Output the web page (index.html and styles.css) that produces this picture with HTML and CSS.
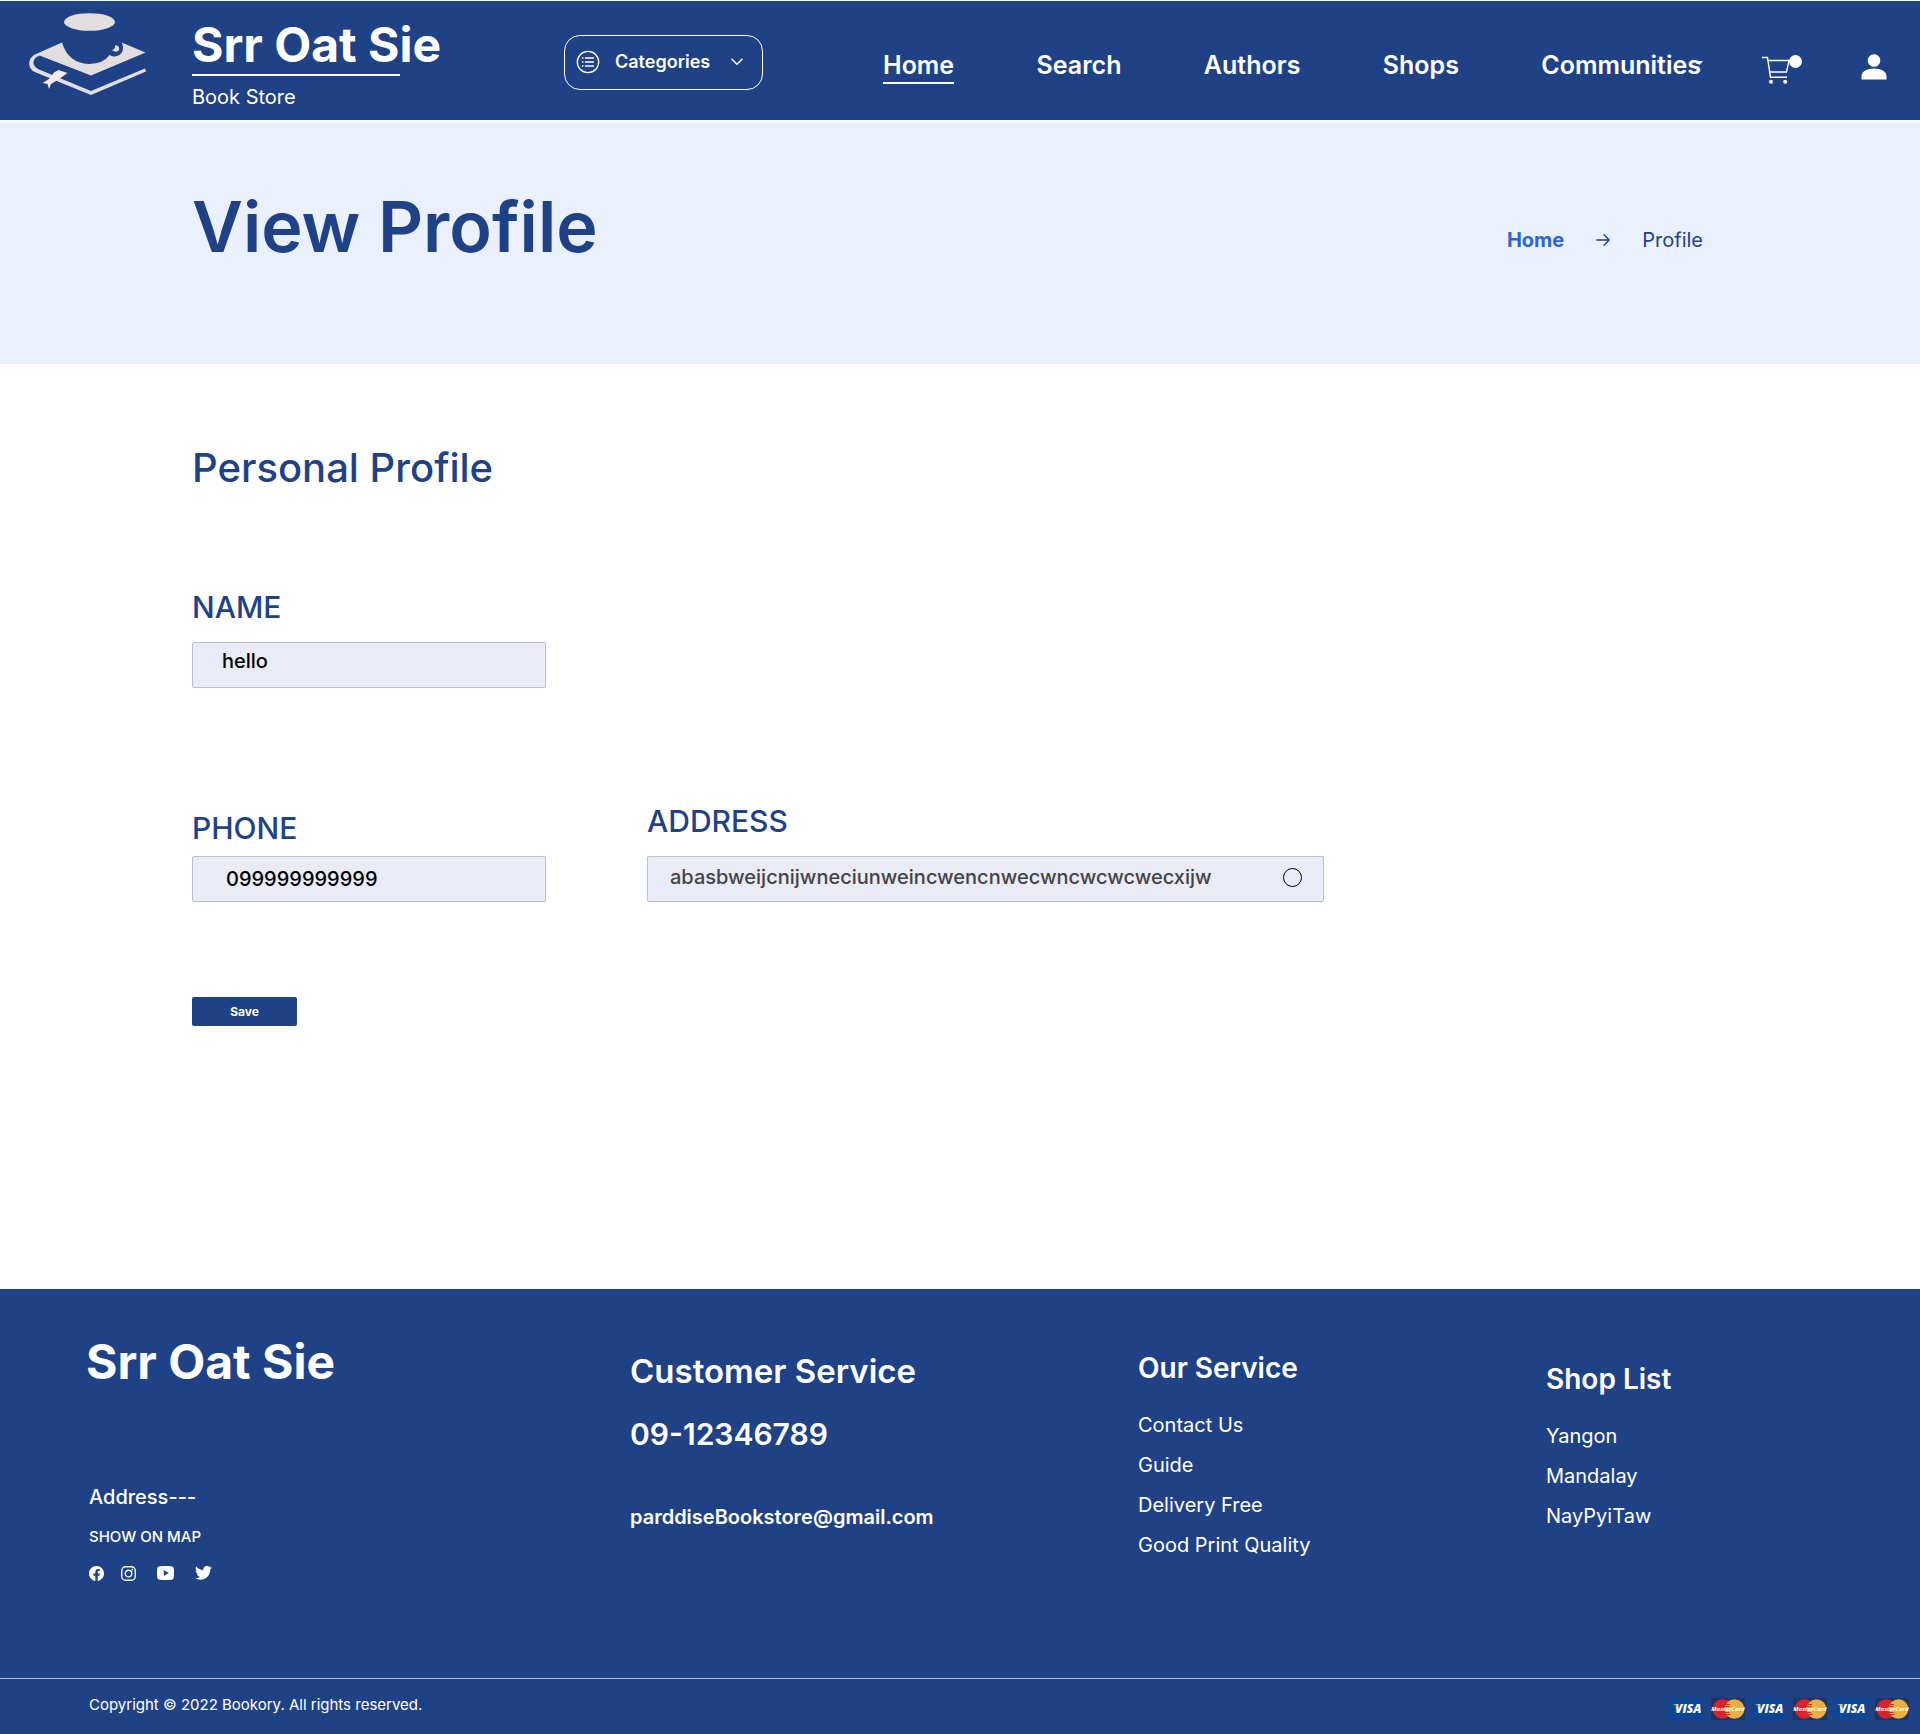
FILE: index.html
```html
<!DOCTYPE html>
<html lang="en">
<head>
<meta charset="utf-8">
<meta name="viewport" content="width=device-width, initial-scale=1">
<title>View Profile - Srr Oat Sie</title>
<link rel="stylesheet" href="styles.css">
</head>
<body>
<header class="header">
  <a class="logo" href="#" aria-label="Srr Oat Sie">
    <svg width="120" height="84" viewBox="28 12 120 84">
      <ellipse cx="89.500" cy="22" rx="25.500" ry="8.800" fill="#e2dee0"/>
      <path d="M62 42.500L36 54C27 58 27 69 36 72.500L91 95L146 71.500L145 68.500L91 91L39 69.500C31 66 32 58 39.500 55.500L91 75.500L145.500 52.500L121.500 42.500C125 48 122.500 56 115 56.500Q112 56.500 109.500 55Q104 63.500 89 64Q68 63 62 42.500Z" fill="#e2dee0"/>
      <path d="M112 50.500Q115 49 115.500 45Q120 46 119 50Q117 53 112 50.500Z" fill="#e2dee0"/>
      <path d="M58.500 70L67.500 73L58.500 79.500L51 84L49 89L47.500 84L42.500 83L49 79L54 72.500Z" fill="#f6e9ec"/>
    </svg>
  </a>
  <div class="brand">
    <a class="wordmark" href="#">Srr Oat Sie</a>
    <span class="tagline">Book Store</span>
  </div>
  <div class="categories-slot">
    <button class="categories" type="button">
      <svg width="24" height="24" viewBox="0 0 24 24" fill="none" stroke="#fff">
        <circle cx="12" cy="12" r="10.700" stroke-width="1.300"/>
        <path d="M9.500 8h8M9.500 12h8M9.500 16h8" stroke-width="1.400" stroke-linecap="round"/>
        <path d="M6 8h1.400M6 12h1.400M6 16h1.400" stroke-width="1.600"/>
      </svg>
      <span>Categories</span>
      <svg width="12" height="8" viewBox="0 0 12 8" fill="none" stroke="#fff" stroke-width="1.500" stroke-linecap="round" stroke-linejoin="round"><path d="M1 1.200l5 5 5-5"/></svg>
    </button>
  </div>
  <nav class="nav">
    <a class="nav-link nav-link-active" href="#">Home</a>
    <a class="nav-link" href="#">Search</a>
    <a class="nav-link" href="#">Authors</a>
    <a class="nav-link" href="#">Shops</a>
    <a class="nav-link nav-link-more" href="#">Communities<svg class="nav-caret" width="7" height="4" viewBox="0 0 7 4"><path d="M0 0h7L3.500 4z" fill="#fff"/></svg></a>
  </nav>
  <div class="actions">
    <a href="#" aria-label="Cart">
      <svg width="40" height="30" viewBox="0 0 40 30" fill="none" stroke="#fff" stroke-width="1.400">
        <path d="M0 3.500h5.500L8.500 23.300H25M6 6.500h21L24.500 18H8"/>
        <circle cx="9" cy="27.700" r="2" fill="#fff" stroke="none"/>
        <circle cx="23.200" cy="27.700" r="2" fill="#fff" stroke="none"/>
        <circle cx="33.500" cy="7.500" r="6.500" fill="#fff" stroke="none"/>
      </svg>
    </a>
    <a href="#" aria-label="Account">
      <svg width="26" height="26" viewBox="0 0 26 26" fill="#fff"><circle cx="13" cy="6.500" r="6.300"/><path d="M.5 25.500V22C.5 17.500 6 14.500 13 14.500S25.500 17.500 25.500 22v3.500z"/></svg>
    </a>
  </div>
</header>

<section class="banner">
  <h1 class="banner-title">View Profile</h1>
  <nav class="breadcrumb" aria-label="Breadcrumb">
    <a class="breadcrumb-home" href="#">Home</a>
    <svg width="14" height="12" viewBox="0 0 14 12" fill="none" stroke="#1f4287" stroke-width="1.300" stroke-linecap="round" stroke-linejoin="round"><path d="M.8 6h12.400M8 .8L13.200 6 8 11.200"/></svg>
    <span>Profile</span>
  </nav>
</section>

<main class="main">
  <h2 class="main-title">Personal Profile</h2>
  <form class="form">
    <div class="field">
      <label class="label" for="name">NAME</label>
      <input class="input input-name" id="name" type="text" value="hello">
    </div>
    <div class="row">
      <div class="field field-tight">
        <label class="label" for="phone">PHONE</label>
        <input class="input" id="phone" type="tel" value="099999999999">
      </div>
      <div class="field field-wide">
        <label class="label" for="address">ADDRESS</label>
        <div class="address-box">
          <input class="address-input" id="address" type="text" value="abasbweijcnijwneciunweincwencnwecwncwcwcwecxijw">
          <input class="address-radio" type="radio" name="default-address" aria-label="Use this address">
        </div>
      </div>
    </div>
    <button class="save" type="button">Save</button>
  </form>
</main>

<footer class="footer">
  <div class="footer-columns">
    <section class="about">
      <a class="wordmark" href="#">Srr Oat Sie</a>
      <div class="contact">
        <p class="address">Address---</p>
        <a class="map-link" href="#">SHOW ON MAP</a>
        <div class="social">
          <a href="#" aria-label="Facebook"><svg width="15" height="15" viewBox="0 0 16 16"><path fill="#fff" d="M16 8.050C16 3.600 12.420 0 8 0S0 3.600 0 8.050c0 4.020 2.930 7.350 6.750 7.950v-5.620H4.720V8.050h2.030V6.270c0-2.010 1.190-3.130 3.020-3.130.88 0 1.790.16 1.790.16v1.980h-1.010c-.99 0-1.300.62-1.300 1.260v1.510h2.220l-.36 2.330H9.250V16C13.070 15.400 16 12.070 16 8.050z"/></svg></a>
          <a href="#" aria-label="Instagram"><svg width="15" height="15" viewBox="0 0 16 16" fill="none" stroke="#fff" stroke-width="1.400"><rect x=".8" y=".8" width="14.400" height="14.400" rx="4"/><circle cx="8" cy="8" r="3.500"/><circle cx="12.200" cy="3.800" r=".9" fill="#fff" stroke="none"/></svg></a>
          <a class="social-wide" href="#" aria-label="YouTube"><svg width="17" height="14" viewBox="0 0 17 14"><path fill="#fff" fill-rule="evenodd" d="M2.500.3Q8.500-.3 14.500.3 16.500.5 16.800 2.500 17.200 7 16.800 11.500 16.500 13.500 14.500 13.700 8.500 14.300 2.500 13.700.5 13.500.2 11.500-.2 7 .2 2.500.5.5 2.500.3zM6.800 4v6l5-3z"/></svg></a>
          <a class="social-wide" href="#" aria-label="Twitter"><svg width="17" height="16" viewBox="0 0 24 22"><path fill="#fff" d="M24 3.300c-.9.400-1.800.7-2.800.8 1-.6 1.800-1.600 2.200-2.700-1 .6-2 1-3.100 1.200A4.900 4.900 0 0 0 11.900 7 14 14 0 0 1 1.700 1.900a4.900 4.900 0 0 0 1.500 6.500c-.8 0-1.600-.2-2.200-.6v.1c0 2.400 1.700 4.400 3.900 4.800-.7.200-1.500.2-2.200.1.600 2 2.400 3.400 4.600 3.400A9.900 9.900 0 0 1 0 18.200a14 14 0 0 0 7.500 2.200c9.100 0 14-7.500 14-14v-.6c1-.7 1.800-1.600 2.500-2.500z"/></svg></a>
        </div>
      </div>
    </section>
    <section class="service">
      <h2 class="service-title">Customer Service</h2>
      <a class="service-phone" href="#">09-12346789</a>
      <a class="service-mail" href="#">parddiseBookstore@gmail.com</a>
    </section>
    <section class="links">
      <h2 class="links-title">Our Service</h2>
      <a href="#">Contact Us</a>
      <a href="#">Guide</a>
      <a href="#">Delivery Free</a>
      <a href="#">Good Print Quality</a>
    </section>
    <section class="links links-shops">
      <h2 class="links-title">Shop List</h2>
      <a href="#">Yangon</a>
      <a href="#">Mandalay</a>
      <a href="#">NayPyiTaw</a>
    </section>
  </div>
  <div class="footer-bottom">
    <p class="copyright">Copyright © 2022 Bookory. All rights reserved.</p>
    <div class="cards">
      <svg width="34" height="22" viewBox="0 0 34 22"><rect width="34" height="22" rx="1" fill="#0e4595"/><text x="5" y="15" class="visa-text">VISA</text><path d="M3 6h3.500q1 0 1.200 1l.6 3Q7 7.500 3 6z" fill="#f2ae14"/></svg>
      <svg width="34" height="22" viewBox="0 0 34 22"><rect width="34" height="22" rx="1" fill="#1c3668"/><circle cx="11.500" cy="11" r="9.800" fill="#d9222a"/><circle cx="23.500" cy="11" r="9.800" fill="#e9b040"/><path d="M14 6.500h5M13.500 8.500h5M13.500 14.500h5M14.500 16.500h5" stroke="#d9222a"/><text x="17" y="13" class="mastercard-text">MasterCard</text></svg>
      <svg width="34" height="22" viewBox="0 0 34 22"><rect width="34" height="22" rx="1" fill="#0e4595"/><text x="5" y="15" class="visa-text">VISA</text><path d="M3 6h3.500q1 0 1.200 1l.6 3Q7 7.500 3 6z" fill="#f2ae14"/></svg>
      <svg width="34" height="22" viewBox="0 0 34 22"><rect width="34" height="22" rx="1" fill="#1c3668"/><circle cx="11.500" cy="11" r="9.800" fill="#d9222a"/><circle cx="23.500" cy="11" r="9.800" fill="#e9b040"/><path d="M14 6.500h5M13.500 8.500h5M13.500 14.500h5M14.500 16.500h5" stroke="#d9222a"/><text x="17" y="13" class="mastercard-text">MasterCard</text></svg>
      <svg width="34" height="22" viewBox="0 0 34 22"><rect width="34" height="22" rx="1" fill="#0e4595"/><text x="5" y="15" class="visa-text">VISA</text><path d="M3 6h3.500q1 0 1.200 1l.6 3Q7 7.500 3 6z" fill="#f2ae14"/></svg>
      <svg width="34" height="22" viewBox="0 0 34 22"><rect width="34" height="22" rx="1" fill="#1c3668"/><circle cx="11.500" cy="11" r="9.800" fill="#d9222a"/><circle cx="23.500" cy="11" r="9.800" fill="#e9b040"/><path d="M14 6.500h5M13.500 8.500h5M13.500 14.500h5M14.500 16.500h5" stroke="#d9222a"/><text x="17" y="13" class="mastercard-text">MasterCard</text></svg>
    </div>
  </div>
</footer>
</body>
</html>
```
FILE: styles.css
```css
:root {
  --navy: #1f4287;
  --pale: #eaf1fd;
  --field: #e9ebf7;
  --line: #bdbfc9;
}

* {
  box-sizing: border-box;
}

body {
  margin: 0;
  background: #fff;
  color: var(--navy);
  font-family: Inter, "Liberation Sans", sans-serif;
  font-size: 20px;
  line-height: 24px;
}

h1, h2, p {
  margin: 0;
}

a {
  color: inherit;
  text-decoration: none;
}

svg {
  display: block;
  flex: none;
}

input, button {
  font: inherit;
}

/* Header */
.header {
  display: grid;
  grid-template-columns: minmax(0, 192fr) minmax(0, 372fr) minmax(0, 319fr) minmax(0, 818fr) minmax(0, 219fr);
  margin: 1px 0 2px;
  padding: 11px 0;
  background: var(--navy);
  color: #fff;
}

.logo {
  padding-left: 28px;
}

.brand {
  display: flex;
  flex-direction: column;
  align-items: flex-start;
  padding-top: 4px;
}

.wordmark {
  font-size: 48px;
  font-weight: 700;
  line-height: 58px;
}

.brand::after {
  content: "";
  order: 1;
  width: 208px;
  height: 2px;
  background: #fff;
}

.tagline {
  order: 2;
  margin-top: 9px;
}

.categories-slot {
  padding-top: 23px;
}

.categories {
  display: flex;
  align-items: center;
  gap: 15px;
  width: 199px;
  height: 55px;
  padding: 0 19px 2px 11px;
  border: 1px solid #fff;
  border-radius: 16px;
  background: none;
  color: #fff;
  font-size: 18px;
  font-weight: 600;
}

.categories svg:last-child {
  margin-left: auto;
}

.nav {
  display: flex;
  justify-content: space-between;
  align-items: flex-start;
  padding-top: 38px;
  font-size: 25px;
  font-weight: 600;
  line-height: 30px;
}

.nav-link {
  padding-bottom: 2px;
  border-bottom: 2px solid transparent;
}

.nav-link-active {
  border-color: #fff;
}

.nav-link-more {
  position: relative;
}

.nav-caret {
  position: absolute;
  top: 11px;
  right: -2px;
}

.actions {
  display: flex;
  justify-content: space-between;
  padding: 42px 33px 0 61px;
}

/* Banner */
.banner {
  display: flex;
  justify-content: space-between;
  align-items: flex-start;
  padding: 63px 217px 95px 10%;
  background: var(--pale);
}

.banner-title {
  font-size: 70px;
  font-weight: 600;
  line-height: 84px;
}

.breadcrumb {
  display: flex;
  align-items: center;
  gap: 32px;
  padding-top: 43px;
}

.breadcrumb-home {
  color: #2b63d9;
  font-weight: 700;
}

/* Profile form */
.main {
  padding: 80px 10% 263px;
}

.main-title {
  margin-bottom: 97px;
  font-size: 40px;
  font-weight: 500;
  line-height: 48px;
}

.row {
  display: flex;
  align-items: flex-end;
  gap: 101px;
  margin: 115px 0 95px;
}

.field {
  display: flex;
  flex-direction: column;
  align-items: flex-start;
  gap: 17px;
}

.field-tight {
  gap: 10px;
}

.field-wide {
  flex: 0 1 677px;
  align-items: stretch;
}

.label {
  font-size: 30px;
  font-weight: 500;
  line-height: 36px;
}

.input,
.address-box {
  height: 46px;
  border: 1px solid var(--line);
  border-radius: 2px;
  background: var(--field);
}

.input {
  width: 354px;
  padding: 0 33px;
  color: #000;
  font-weight: 500;
}

.input-name {
  padding: 0 29px 8px;
}

.address-box {
  display: flex;
  align-items: center;
  padding: 0 21px 4px 22px;
}

.address-input {
  flex: 1;
  min-width: 0;
  padding: 0;
  border: 0;
  background: none;
  color: #444;
  font-weight: 500;
}

.address-radio {
  appearance: none;
  width: 19px;
  height: 19px;
  margin: 0;
  border: 1px solid #000;
  border-radius: 50%;
}

.address-radio:checked {
  background: var(--navy);
}

.save {
  display: block;
  width: 105px;
  height: 29px;
  padding: 0;
  border: 0;
  border-radius: 2px;
  background: var(--navy);
  color: #fff;
  font-size: 12px;
  font-weight: 700;
}

/* Footer */
.footer {
  background: var(--navy);
  color: #fff;
}

.footer-columns {
  display: grid;
  grid-template-columns: minmax(0, 544fr) minmax(0, 508fr) minmax(0, 408fr) minmax(0, 287fr);
  padding: 44px 87px 97px 86px;
}

.contact {
  display: flex;
  flex-direction: column;
  align-items: flex-start;
  gap: 18px;
  padding: 94px 0 0 3px;
}

.address {
  font-weight: 500;
}

.map-link {
  font-size: 15px;
  font-weight: 500;
  line-height: 20px;
}

.social {
  display: flex;
  align-items: center;
  gap: 17px;
}

.social-wide {
  margin-left: 4px;
}

.service {
  display: flex;
  flex-direction: column;
  align-items: flex-start;
  padding-top: 18px;
  font-weight: 600;
}

.service-title {
  font-size: 33px;
  font-weight: 600;
  line-height: 40px;
}

.service-phone {
  margin: 25px 0 53px;
  font-size: 30px;
  line-height: 36px;
}

.links {
  display: flex;
  flex-direction: column;
  align-items: flex-start;
  gap: 16px;
  padding-top: 18px;
}

.links-shops {
  padding-top: 29px;
}

.links-title {
  margin-bottom: 12px;
  font-size: 28px;
  font-weight: 600;
  line-height: 34px;
}

.footer-bottom {
  display: flex;
  justify-content: space-between;
  align-items: flex-start;
  padding: 14px 11px 16px 89px;
  border-top: 1px solid #b9b9bd;
}

.copyright {
  font-size: 15px;
}

.cards {
  display: flex;
  gap: 7px;
  padding-top: 5px;
}

.visa-text {
  fill: #fff;
  font: italic 800 12px "Open Sans", sans-serif;
}

.mastercard-text {
  fill: #fff;
  font: italic 700 6px "Open Sans", sans-serif;
  text-anchor: middle;
}
```
